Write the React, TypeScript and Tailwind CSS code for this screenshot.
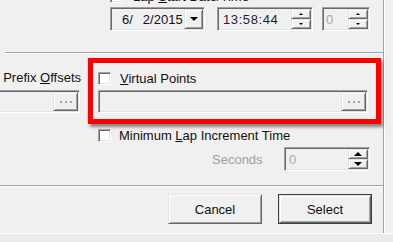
import React from "react";

const sunken =
  "border border-t-[#a0a0a0] border-l-[#a0a0a0] border-b-white border-r-white shadow-[inset_1px_1px_0_#696969,inset_-1px_-1px_0_#e3e3e3]";
const raised =
  "border border-t-[#e3e3e3] border-l-[#e3e3e3] border-b-[#696969] border-r-[#696969] shadow-[inset_1px_1px_0_#ffffff,inset_-1px_-1px_0_#a0a0a0] bg-[#f0f0f0]";

const Checkbox: React.FC = () => <div className={`w-[13px] h-[13px] shrink-0 bg-white ${sunken}`} />;

const Up: React.FC<{ big?: boolean }> = ({ big }) =>
  big ? (
    <div className="w-0 h-0 border-x-[4px] border-b-[4px] border-x-transparent border-b-black" />
  ) : (
    <div className="w-0 h-0 border-x-[2px] border-b-[2px] border-x-transparent border-b-black" />
  );

const Down: React.FC<{ big?: boolean }> = ({ big }) =>
  big ? (
    <div className="w-0 h-0 border-x-[4px] border-t-[4px] border-x-transparent border-t-black" />
  ) : (
    <div className="w-0 h-0 border-x-[2px] border-t-[2px] border-x-transparent border-t-black" />
  );

const Spin: React.FC<{ big?: boolean }> = ({ big }) => (
  <div className="flex flex-col w-[20px] h-full shrink-0">
    <div className={`flex-1 flex items-center justify-center ${raised}`}>
      <Up big={big} />
    </div>
    <div className={`flex-1 flex items-center justify-center ${raised}`}>
      <Down big={big} />
    </div>
  </div>
);

const Dots: React.FC = () => (
  <div className={`w-[25px] h-full shrink-0 flex items-center justify-center gap-[3px] ${raised}`}>
    <span className="w-[2px] h-[2px] bg-[#a0a0a0]" />
    <span className="w-[2px] h-[2px] bg-[#a0a0a0]" />
    <span className="w-[2px] h-[2px] bg-[#a0a0a0]" />
  </div>
);

export default function App() {
  return (
    <div className="w-[393px] h-[242px] bg-[#f0f0f0] overflow-hidden flex flex-col text-[13px] leading-[15px] text-[#111] font-['Liberation_Sans',Arial,sans-serif]">
      <div className="flex h-[233px] shrink-0">
        <div className="w-[384px] border-r border-[#a0a0a0] flex flex-col">
          {/* cut-off row at the top */}
          <div className="flex items-center h-[13px] -mt-[10px] ml-[110px]">
            <Checkbox />
            <span className="ml-[10px] whitespace-nowrap">
              Lap <u>S</u>tart Date/Time
            </span>
          </div>

          <div className="flex mt-[4px] ml-[110px] h-[24px]">
            <div className={`w-[95px] h-full flex items-stretch bg-[#f0f0f0] p-[1px] ${sunken}`}>
              <div className="flex-1 flex items-center pl-[10px] whitespace-nowrap">
                <span>6/</span>
                <span className="ml-[10px]">2/2015</span>
              </div>
              <div className={`w-[19px] flex items-center justify-center ${raised}`}>
                <div className="w-0 h-0 border-x-[4px] border-t-[4px] border-x-transparent border-t-black" />
              </div>
            </div>
            <div className={`ml-[12px] w-[96px] h-full flex bg-[#f0f0f0] p-[1px] ${sunken}`}>
              <div className="flex-1 flex items-center pl-[4px] tracking-[0.6px] text-[#1c2340]">13:58:44</div>
              <Spin />
            </div>
            <div className={`ml-[9px] w-[48px] h-full flex bg-[#f0f0f0] p-[1px] ${sunken}`}>
              <div className="flex-1 flex items-center pl-[2px] text-[#a8a8b8]">0</div>
              <Spin />
            </div>
          </div>

          <div className="mt-[21px] ml-[5px] h-[2px] border-t border-t-[#a0a0a0] border-b border-b-white" />

          <div className="flex h-[131px]">
            <div className="w-[88px] shrink-0 flex flex-col">
              <div className="mt-[16px] pr-[7px] text-right whitespace-nowrap">
                Prefix <u>O</u>ffsets
              </div>
              <div className={`mt-[5px] -ml-[4px] w-[84px] h-[23px] flex justify-end bg-[#f0f0f0] p-[1px] ${sunken}`}>
                <Dots />
              </div>
            </div>

            <div className="flex-1 flex flex-col">
              <div className="mt-[4px] w-[293px] h-[66px] border-[5px] border-[#ff0000] shadow-[2px_3px_3px_rgba(0,0,0,0.45)] pl-[5px] pt-[8px]">
                <div className="flex items-center h-[14px]">
                  <Checkbox />
                  <span className="ml-[9px] whitespace-nowrap">
                    <u>V</u>irtual Points
                  </span>
                </div>
                <div className={`mt-[5px] w-[270px] h-[23px] flex justify-end bg-[#f0f0f0] p-[1px] ${sunken}`}>
                  <Dots />
                </div>
              </div>

              <div className="mt-[4px] ml-[10px] flex items-center h-[14px]">
                <Checkbox />
                <span className="ml-[8px] whitespace-nowrap">
                  Minimum <u>L</u>ap Increment Time
                </span>
              </div>

              <div className="mt-[5px] flex items-center h-[24px]">
                <span className="ml-[124px] w-[50px] text-[#a0a0a0]">Seconds</span>
                <div className={`ml-[22px] w-[86px] h-full flex bg-[#f0f0f0] p-[1px] ${sunken}`}>
                  <div className="flex-1 flex items-center pl-[3px] text-[#a8a8b8]">0</div>
                  <Spin big />
                </div>
              </div>
            </div>
          </div>

          <div className="h-[2px] border-t border-t-[#a0a0a0] border-b border-b-white" />

          <div className="mt-[7px] ml-[168px] flex">
            <button className={`w-[94px] h-[30px] flex items-center justify-center ${raised}`}>Cancel</button>
            <div className="ml-[16px] w-[94px] h-[30px] border border-[#3c3c3c]">
              <button className={`w-full h-full flex items-center justify-center ${raised}`}>Select</button>
            </div>
          </div>
        </div>
        <div className="flex-1 border-l border-white" />
      </div>
      <div className="flex-1 border-t border-white bg-[#ebebeb]" />
    </div>
  );
}
